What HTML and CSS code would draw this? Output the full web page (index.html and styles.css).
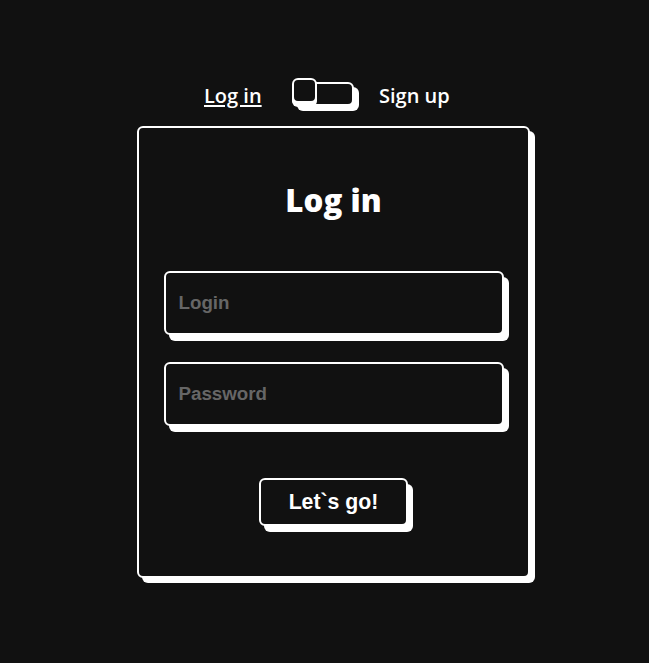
FILE: index.html
```html
<!DOCTYPE html>
<html lang="en">
<head>
<meta charset="utf-8">
<title>Log in</title>
<link rel="stylesheet" href="styles.css">
</head>
<body>
  <div class="switch-row">
    <span class="side-label side-label--active">Log in</span>
    <span class="switch">
      <span class="knob"></span>
    </span>
    <span class="side-label side-label--right">Sign up</span>
  </div>
  <form class="card">
    <div class="title">Log in</div>
    <input class="field" type="text" placeholder="Login">
    <input class="field field--second" type="password" placeholder="Password">
    <button class="btn" type="button">Let`s go!</button>
  </form>
</body>
</html>
```

FILE: styles.css
```css
html, body {
  margin: 0;
  padding: 0;
  background: #111111;
}
body {
  width: 649px;
  height: 663px;
  overflow: hidden;
  padding-top: 82px;
  box-sizing: border-box;
}
.switch-row {
  display: flex;
  align-items: flex-start;
  margin-left: 204px;
  height: 27px;
}
.side-label {
  font-family: "Open Sans", "Liberation Sans", sans-serif;
  font-weight: 600;
  font-size: 20px;
  line-height: 27px;
  color: #ffffff;
}
.side-label--active {
  width: 88px;
  text-decoration: underline;
  text-underline-offset: 2px;
  text-decoration-thickness: 2px;
}
.side-label--right {
  margin-left: 25px;
}
.switch {
  position: relative;
  box-sizing: border-box;
  width: 62px;
  height: 24px;
  border: 2px solid #ffffff;
  border-radius: 6px;
  background: #111111;
  box-shadow: 5px 5px 0 #ffffff;
}
.knob {
  position: absolute;
  box-sizing: border-box;
  left: -2px;
  top: -6px;
  width: 25px;
  height: 25px;
  border: 2px solid #ffffff;
  border-radius: 6px;
  background: #111111;
  box-shadow: 0 4px 0 #ffffff;
}
.card {
  box-sizing: border-box;
  width: 393px;
  height: 452px;
  margin: 17px 0 0 137px;
  padding-top: 51px;
  display: flex;
  flex-direction: column;
  align-items: center;
  border: 2px solid #ffffff;
  border-radius: 6px;
  background: #111111;
  box-shadow: 5px 5px 0 #ffffff;
}
.title {
  font-family: "Open Sans", "Liberation Sans", sans-serif;
  font-weight: 800;
  font-size: 31.25px;
  line-height: 43px;
  color: #ffffff;
  text-align: center;
}
.field {
  box-sizing: border-box;
  width: 340px;
  height: 64px;
  margin-top: 49px;
  padding: 0 13px;
  border: 2px solid #ffffff;
  border-radius: 6px;
  background: #111111;
  box-shadow: 5px 6px 0 #ffffff;
  font-family: "Liberation Sans", Arial, sans-serif;
  font-weight: 700;
  font-size: 18.75px;
  color: #ffffff;
  outline: none;
}
.field::placeholder {
  color: #666666;
  opacity: 1;
}
.field--second {
  margin-top: 27px;
}
.btn {
  box-sizing: border-box;
  width: 149px;
  height: 48px;
  margin-top: 52px;
  border: 2px solid #ffffff;
  border-radius: 6px;
  background: #111111;
  box-shadow: 5px 6px 0 #ffffff;
  font-family: "Liberation Sans", Arial, sans-serif;
  font-weight: 700;
  font-size: 21.25px;
  color: #ffffff;
  padding: 0;
}
```
